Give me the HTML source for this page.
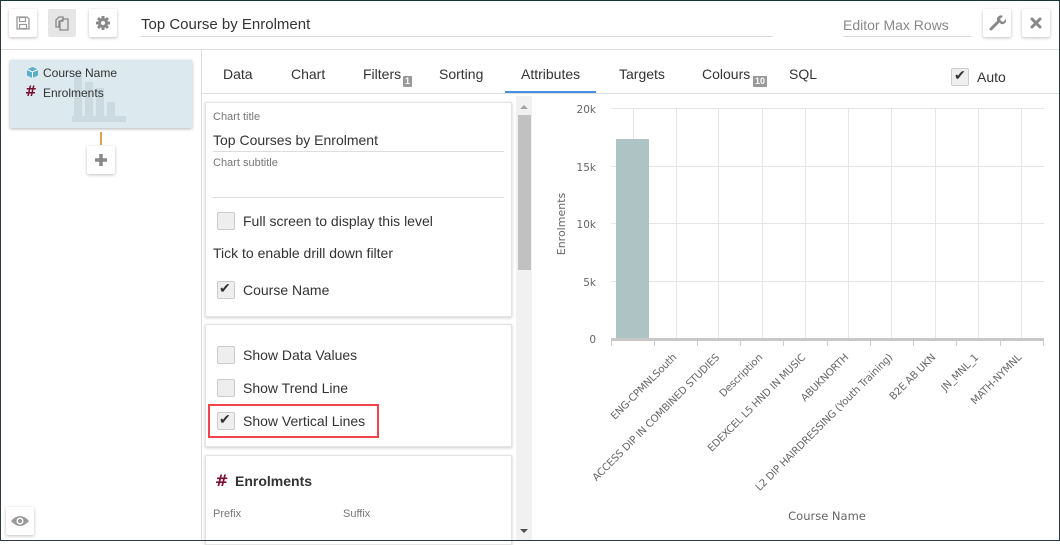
<!DOCTYPE html>
<html><head><meta charset="utf-8"><style>
*{box-sizing:border-box;margin:0;padding:0}
body{width:1060px;height:541px;overflow:hidden;font-family:"Liberation Sans",Arial,sans-serif;color:#333;background:#fff;position:relative}
.frame{position:absolute;left:0;top:0;width:1060px;height:541px;border:1px solid #2b3b40;border-top-color:#16343a}
.abs{position:absolute}
.btn{position:absolute;width:28px;height:28px;background:#fff;border-radius:2px;box-shadow:0 1px 3px rgba(0,0,0,.25);display:flex;align-items:center;justify-content:center}
.tab{position:absolute;top:66px;font-size:14px;color:#333}
.badge{position:absolute;background:#999;color:#fff;font-size:9px;font-weight:bold;padding:0 2px;line-height:11px;border-radius:1px}
.card{position:absolute;left:205px;width:307px;background:#fff;box-shadow:0 1px 3px rgba(0,0,0,.2);border:1px solid #e4e4e4}
.cb{position:absolute;width:18px;height:18px;border:1px solid #ccc;border-radius:2px;background:#eee}
.lbl{position:absolute;font-size:14px;color:#333}
.small{position:absolute;font-size:11px;color:#777}
.hash{position:absolute;font-weight:bold;color:#7a1030;font-family:"DejaVu Sans",sans-serif}
</style></head><body>
<!-- header -->
<div class="abs" style="left:0;top:49px;width:1060px;height:1px;background:#ddd"></div>
<div class="btn" style="left:9px;top:9px"><svg width="16" height="16" viewBox="0 0 16 16"><path d="M2 2h10l2 2v10H2z" fill="none" stroke="#999" stroke-width="1.3"/><rect x="4.5" y="2.5" width="6" height="4" fill="none" stroke="#999" stroke-width="1.2"/><rect x="4.5" y="9.5" width="7" height="4" fill="none" stroke="#999" stroke-width="1.2"/></svg></div>
<div class="btn" style="left:48px;top:9px;background:#e6e6e6;box-shadow:none"><svg width="18" height="18" viewBox="0 0 18 18"><path d="M3 6l3-3h4v4H6v6H3z" fill="none" stroke="#888" stroke-width="1.3"/><path d="M7 8l3-3h5v11H7z" fill="none" stroke="#888" stroke-width="1.3"/></svg></div>
<div class="btn" style="left:89px;top:9px"><svg width="16" height="16" viewBox="0 0 16 16"><g fill="#888"><circle cx="8" cy="8" r="5"/><rect x="6.5" y="1" width="3" height="14"/><rect x="1" y="6.5" width="14" height="3"/><rect x="6.5" y="1" width="3" height="14" transform="rotate(45 8 8)"/><rect x="6.5" y="1" width="3" height="14" transform="rotate(-45 8 8)"/></g><circle cx="8" cy="8" r="2" fill="#fff"/></svg></div>
<div class="abs" style="left:141px;top:16px;font-size:15px;color:#333">Top Course by Enrolment</div>
<div class="abs" style="left:141px;top:36px;width:632px;height:1px;background:#ddd"></div>
<div class="abs" style="left:843px;top:17px;font-size:14px;color:#888">Editor Max Rows</div>
<div class="abs" style="left:843px;top:36px;width:128px;height:1px;background:#ddd"></div>
<div class="btn" style="left:983px;top:9px"><svg width="18" height="18" viewBox="0 0 18 18"><path d="M3 15l7-7" stroke="#888" stroke-width="3" stroke-linecap="round"/><path d="M9 6a4 4 0 0 1 6-4l-3 3 1 2 2 1 3-3a4 4 0 0 1-5 5z" fill="#888"/></svg></div>
<div class="btn" style="left:1022px;top:9px"><svg width="14" height="14" viewBox="0 0 14 14"><path d="M3 3l8 8M11 3l-8 8" stroke="#888" stroke-width="3" stroke-linecap="round"/></svg></div>
<!-- left panel -->
<div class="abs" style="left:201px;top:50px;width:1px;height:491px;background:#ddd"></div>
<div class="abs" style="left:10px;top:60px;width:182px;height:68px;background:#dce9ee;box-shadow:0 1px 3px rgba(0,0,0,.3)"></div>
<svg class="abs" style="left:72px;top:66px" width="56" height="56"><g fill="#cadae0"><rect x="2" y="6" width="8" height="46"/><rect x="13" y="16" width="8" height="36"/><rect x="24" y="22" width="8" height="30"/><rect x="35" y="36" width="8" height="16"/><rect x="0" y="50" width="54" height="6"/></g></svg>
<svg class="abs" style="left:26px;top:66px" width="13" height="13" viewBox="0 0 13 13"><path d="M6.5 1L12 3.5v6L6.5 12 1 9.5v-6z" fill="#5aaecb"/><path d="M1 3.5l5.5 2.5L12 3.5M6.5 6v6" stroke="#fff" stroke-width="1" fill="none"/></svg>
<div class="abs" style="left:43px;top:66px;font-size:12px;color:#333">Course Name</div>
<div class="hash" style="left:25px;top:84px;font-size:14px">#</div>
<div class="abs" style="left:43px;top:86px;font-size:12px;color:#333">Enrolments</div>
<div class="abs" style="left:100px;top:132px;width:2px;height:13px;background:#e0a050"></div>
<div class="btn" style="left:87px;top:146px"><svg width="14" height="14"><path d="M7 1v12M1 7h12" stroke="#888" stroke-width="3.5"/></svg></div>
<div class="btn" style="left:6px;top:507px"><svg width="20" height="14" viewBox="0 0 20 14"><path d="M1 7q9-10 18 0q-9 10-18 0z" fill="#999"/><circle cx="10" cy="7" r="3.5" fill="#fff"/><circle cx="10" cy="7" r="2" fill="#999"/></svg></div>
<!-- tabs -->
<div class="tab" style="left:223px">Data</div>
<div class="tab" style="left:291px">Chart</div>
<div class="tab" style="left:363px">Filters</div><div class="badge" style="left:403px;top:76px">1</div>
<div class="tab" style="left:439px">Sorting</div>
<div class="tab" style="left:521px">Attributes</div>
<div class="tab" style="left:619px">Targets</div>
<div class="tab" style="left:702px">Colours</div><div class="badge" style="left:753px;top:76px">10</div>
<div class="tab" style="left:789px">SQL</div>
<div class="abs" style="left:202px;top:93px;width:858px;height:1px;background:#ddd"></div>
<div class="abs" style="left:505px;top:91px;width:91px;height:2px;background:#4a90e2"></div>
<div class="cb" style="left:951px;top:68px"></div><div class="abs" style="left:954px;top:67px;font-size:14px;color:#333">✔</div>
<div class="abs" style="left:977px;top:69px;font-size:14px">Auto</div>
<!-- middle panel -->
<div class="card" style="top:102px;height:215px"></div>
<div class="small" style="left:213px;top:111px">Chart title</div>
<div class="lbl" style="left:213px;top:132px">Top Courses by Enrolment</div>
<div class="abs" style="left:213px;top:151px;width:291px;height:1px;background:#ddd"></div>
<div class="small" style="left:213px;top:157px">Chart subtitle</div>
<div class="abs" style="left:213px;top:197px;width:291px;height:1px;background:#ddd"></div>
<div class="cb" style="left:217px;top:212px"></div><div class="lbl" style="left:243px;top:213px">Full screen to display this level</div>
<div class="lbl" style="left:213px;top:245px">Tick to enable drill down filter</div>
<div class="cb" style="left:217px;top:281px"></div><div class="abs" style="left:219px;top:280px;font-size:14px">✔</div><div class="lbl" style="left:243px;top:282px">Course Name</div>
<div class="card" style="top:324px;height:123px"></div>
<div class="cb" style="left:217px;top:346px"></div><div class="lbl" style="left:243px;top:347px">Show Data Values</div>
<div class="cb" style="left:217px;top:379px"></div><div class="lbl" style="left:243px;top:380px">Show Trend Line</div>
<div class="abs" style="left:208px;top:404px;width:171px;height:34px;border:2px solid #f0444a"></div>
<div class="cb" style="left:217px;top:412px"></div><div class="abs" style="left:219px;top:411px;font-size:14px">✔</div><div class="lbl" style="left:243px;top:413px">Show Vertical Lines</div>
<div class="card" style="top:455px;height:90px"></div>
<div class="hash" style="left:215px;top:471px;font-size:16px">#</div>
<div class="abs" style="left:235px;top:473px;font-size:14px;font-weight:bold;color:#333">Enrolments</div>
<div class="small" style="left:213px;top:508px">Prefix</div>
<div class="small" style="left:343px;top:508px">Suffix</div>
<div class="abs" style="left:516px;top:96px;width:16px;height:445px;background:#f1f1f1"></div>
<div class="abs" style="left:518px;top:115px;width:13px;height:155px;background:#c1c1c1"></div>
<svg class="abs" style="left:519px;top:104px" width="10" height="6"><path d="M1 5l4-4 4 4z" fill="#a3a3a3"/></svg>
<svg class="abs" style="left:519px;top:528px" width="10" height="6"><path d="M1 1l4 4 4-4z" fill="#505050"/></svg>
<!-- chart -->
<svg class="abs" style="left:533px;top:94px" width="527" height="447">
<g transform="translate(-533,-94)" font-family="'DejaVu Sans',sans-serif" font-size="10.5" fill="#666">
<g stroke="#e6e6e6" stroke-width="1">
<line x1="611" x2="1044" y1="108.5" y2="108.5"/><line x1="611" x2="1044" y1="166.5" y2="166.5"/><line x1="611" x2="1044" y1="223.5" y2="223.5"/><line x1="611" x2="1044" y1="281.5" y2="281.5"/>
<line x1="633.5" x2="633.5" y1="108" y2="339"/><line x1="676.5" x2="676.5" y1="108" y2="339"/><line x1="718.5" x2="718.5" y1="108" y2="339"/><line x1="762.5" x2="762.5" y1="108" y2="339"/><line x1="805.5" x2="805.5" y1="108" y2="339"/><line x1="848.5" x2="848.5" y1="108" y2="339"/><line x1="891.5" x2="891.5" y1="108" y2="339"/><line x1="935.5" x2="935.5" y1="108" y2="339"/><line x1="978.5" x2="978.5" y1="108" y2="339"/><line x1="1021.5" x2="1021.5" y1="108" y2="339"/>
</g>
<rect x="616" y="139" width="33" height="200" fill="#adc3c4"/>
<rect x="659" y="338" width="33" height="1" fill="#adc3c4"/>
<rect x="611" y="338" width="433" height="3" fill="#c8c8c8"/>
<g stroke="#ccc"><line x1="611.5" x2="611.5" y1="341" y2="346"/><line x1="654.5" x2="654.5" y1="341" y2="346"/><line x1="697.5" x2="697.5" y1="341" y2="346"/><line x1="740.5" x2="740.5" y1="341" y2="346"/><line x1="783.5" x2="783.5" y1="341" y2="346"/><line x1="827.5" x2="827.5" y1="341" y2="346"/><line x1="870.5" x2="870.5" y1="341" y2="346"/><line x1="913.5" x2="913.5" y1="341" y2="346"/><line x1="956.5" x2="956.5" y1="341" y2="346"/><line x1="1000.5" x2="1000.5" y1="341" y2="346"/><line x1="1043.5" x2="1043.5" y1="341" y2="346"/></g>
<g text-anchor="end"><text x="596" y="113">20k</text><text x="596" y="171">15k</text><text x="596" y="228">10k</text><text x="596" y="286">5k</text><text x="596" y="343">0</text></g>
<text transform="translate(565,224) rotate(-90)" text-anchor="middle" font-size="11">Enrolments</text>
<g text-anchor="end" font-size="10.2" letter-spacing="-0.2">
<text transform="translate(677,358) rotate(-45)">ENG-CPMNLSouth</text>
<text transform="translate(720,358) rotate(-45)">ACCESS DIP IN COMBINED STUDIES</text>
<text transform="translate(763,358) rotate(-45)">Description</text>
<text transform="translate(806,358) rotate(-45)">EDEXCEL L5 HND IN MUSIC</text>
<text transform="translate(849,358) rotate(-45)">ABUKNORTH</text>
<text transform="translate(893,358) rotate(-45)">L2 DIP HAIRDRESSING (Youth Training)</text>
<text transform="translate(936,358) rotate(-45)">B2E AB UKN</text>
<text transform="translate(979,358) rotate(-45)">JN_MNL_1</text>
<text transform="translate(1022,358) rotate(-45)">MATH-NYMNL</text>
</g>
<text x="827" y="520" text-anchor="middle" font-size="11.5">Course Name</text>
</g></svg>
<div class="frame"></div>
</body></html>
